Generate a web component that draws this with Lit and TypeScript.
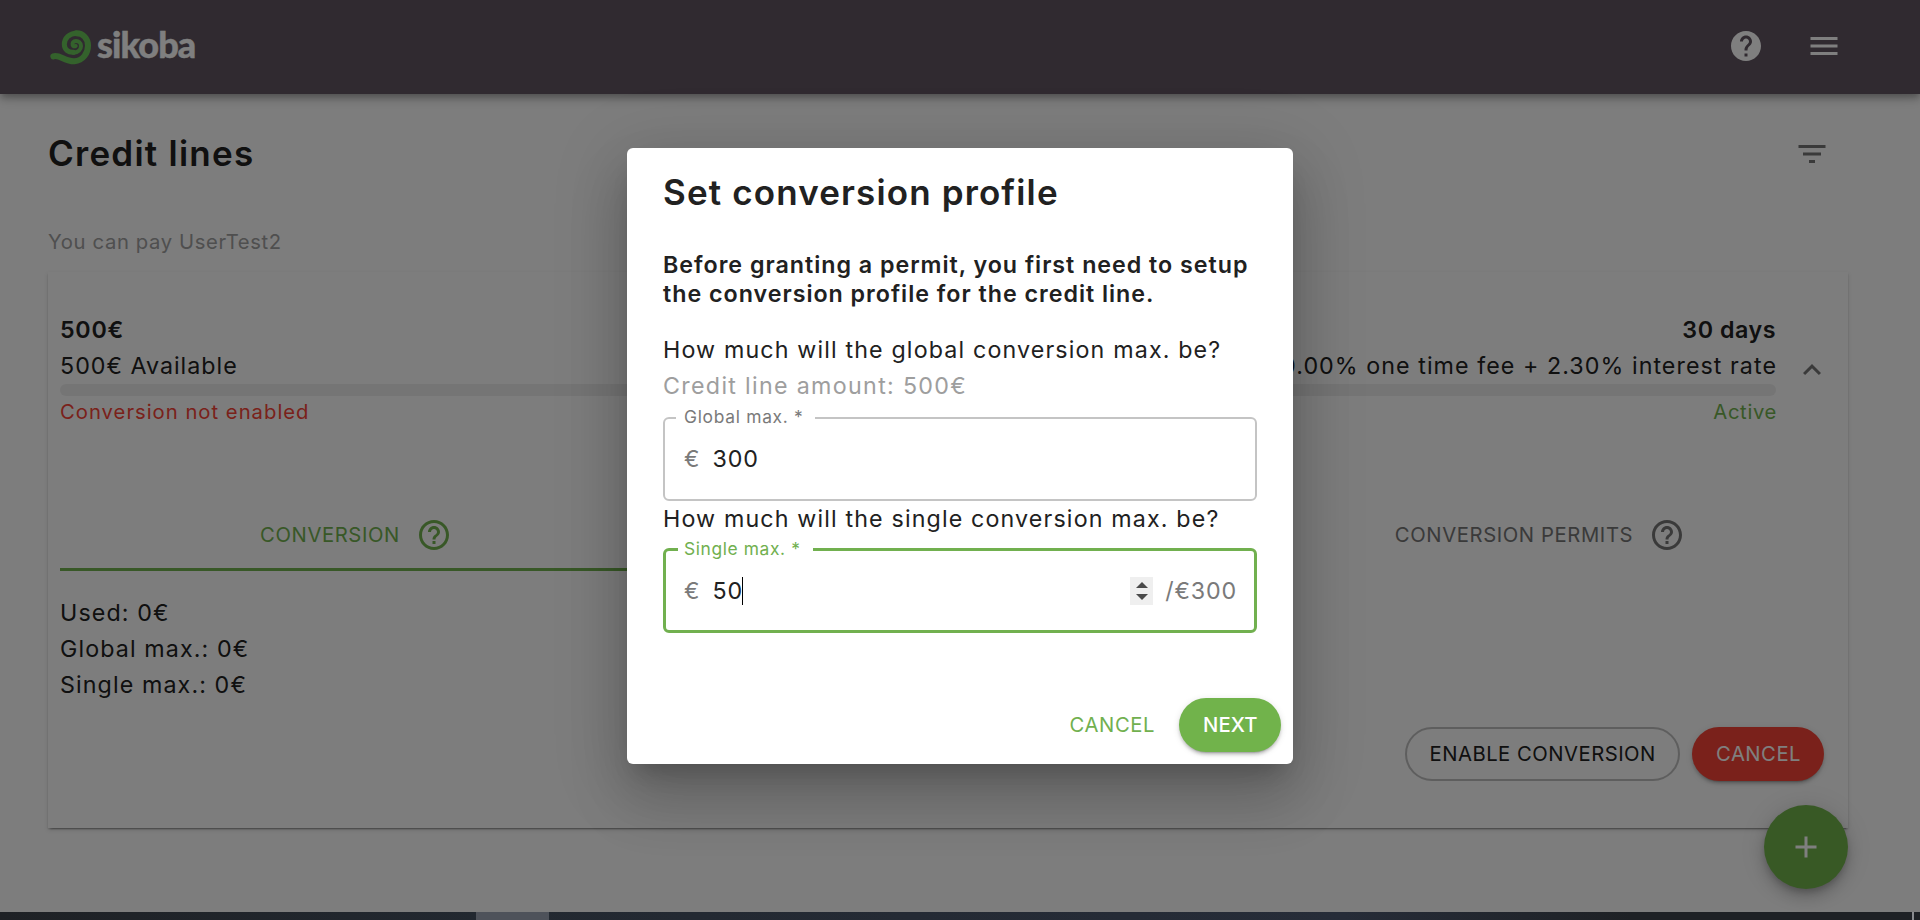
import { LitElement, html, css, svg } from "lit";
import { customElement, property } from "lit/decorators.js";
import { classMap } from "lit/directives/class-map.js";

const ICONS: Record<string, string> = {
  help: "M12 2C6.48 2 2 6.48 2 12s4.48 10 10 10 10-4.48 10-10S17.52 2 12 2zm1 17h-2v-2h2v2zm2.07-7.75l-.9.92C13.45 12.9 13 13.5 13 15h-2v-.5c0-1.1.45-2.1 1.17-2.83l1.24-1.26c.37-.36.59-.86.59-1.41 0-1.1-.9-2-2-2s-2 .9-2 2H8c0-2.21 1.79-4 4-4s4 1.79 4 4c0 .88-.36 1.68-.93 2.25z",
  helpOutline: "M11 18h2v-2h-2v2zm1-16C6.48 2 2 6.48 2 12s4.48 10 10 10 10-4.48 10-10S17.52 2 12 2zm0 18c-4.41 0-8-3.59-8-8s3.59-8 8-8 8 3.59 8 8-3.59 8-8 8zm0-14c-2.21 0-4 1.79-4 4h2c0-1.1.9-2 2-2s2 .9 2 2c0 2-3 1.75-3 5h2c0-2.25 3-2.5 3-5 0-2.21-1.79-4-4-4z",
  menu: "M3 18h18v-2H3v2zm0-5h18v-2H3v2zm0-7v2h18V6H3z",
  filter: "M10 18h4v-2h-4v2zM3 6v2h18V6H3zm3 7h12v-2H6v2z",
  expandLess: "M12 8l-6 6 1.41 1.41L12 10.83l4.59 4.58L18 14z",
  add: "M19 13h-6v6h-2v-6H5v-2h6V5h2v6h6v2z",
};

@customElement("sk-icon")
class SkIcon extends LitElement {
  @property() name = "";
  static styles = css`
    :host { display: block; width: 36px; height: 36px; flex: none; }
    .svg { display: block; width: 100%; height: 100%; fill: currentColor; }
  `;
  render() {
    return html`<svg class="svg" viewBox="0 0 24 24">${svg`<path d=${ICONS[this.name] ?? ""}></path>`}</svg>`;
  }
}

@customElement("sk-logo")
class SkLogo extends LitElement {
  static styles = css`
    :host { display: flex; align-items: center; height: 40px; }
    .mark { display: block; width: 42px; height: 36px; margin-top: 3px; flex: none; fill: none; stroke: #69c458; stroke-linecap: round; }
    .word {
      font: 900 36px/40px "Lato", sans-serif; letter-spacing: -0.9px; color: #fff;
      -webkit-text-stroke: 0.4px #fff; margin: 0 0 4px 5px;
    }
  `;
  render() {
    return html`
      <svg class="mark" viewBox="29 29 126 108">
        <path stroke-width="18" d="M39 108C58 102 74 124 102 123C128 121 143 98 143 76C143 54 128 39 108 39"></path>
        <path stroke-width="15" d="M108 38.500C88 38.500 72 53 72 72C72 88 85 97 99 96"></path>
        <path stroke-width="12" d="M99 97C114 96 122 87 122 77C122 67 114 62 107 62C99 62 95 68 97 74C98 78 102 79 106 77"></path>
      </svg>
      <span class="word">sikoba</span>
    `;
  }
}

@customElement("sk-amount-field")
class SkAmountField extends LitElement {
  @property() label = "";
  @property() value = "";
  @property() suffix = "";
  @property({ type: Boolean }) focused = false;
  static styles = css`
    :host { display: block; }
    .box {
      position: relative; box-sizing: border-box; display: flex; align-items: center;
      height: 84px; padding: 0 19px; border: 2px solid #c4c4c4; border-radius: 6px;
      font: 400 23.25px/28px "Inter", sans-serif; letter-spacing: 0.9px; color: #212121;
    }
    .focused { height: 85px; padding: 0 18px; border: 3px solid #71b04f; }
    .label {
      position: absolute; top: -12px; left: 11px; height: 20px; padding: 0 11.5px 0 8px; background: #fff;
      font-size: 17.4px; line-height: 20px; letter-spacing: 0.7px; color: #7a7a7a; white-space: pre;
    }
    .focused .label { left: 12px; padding: 0 12.5px 0 6px; letter-spacing: 0.6px; color: #71b04f; }
    .unit { color: #7a7a7a; width: 28.500px; }
    .caret { width: 1.5px; height: 28px; background: #000; margin-left: -1.5px; }
    .rest { flex: 1; }
    .spin {
      display: flex; flex-direction: column; align-items: center; justify-content: center; gap: 6px;
      width: 23px; height: 28px; background: #efefef; margin-right: 12px;
    }
    .tri { display: block; width: 12px; height: 6px; fill: #4a4a4a; }
    .suffix { color: #7a7a7a; letter-spacing: 0.84px; margin-right: -1px; }
  `;
  render() {
    return html`
      <div class=${classMap({ box: true, focused: this.focused })}>
        <span class="label">${this.label} *</span>
        <span class="unit">€</span>
        <span class="value">${this.value}</span>
        ${this.focused ? html`<span class="caret"></span>` : ""}
        <span class="rest"></span>
        ${this.focused
          ? html`<span class="spin">
              <svg class="tri" viewBox="0 0 12 6"><path d="M6 0L12 6H0z"></path></svg>
              <svg class="tri" viewBox="0 0 12 6"><path d="M0 0H12L6 6z"></path></svg>
            </span>`
          : ""}
        ${this.suffix ? html`<span class="suffix">${this.suffix}</span>` : ""}
      </div>
    `;
  }
}

@customElement("sk-dialog")
class SkDialog extends LitElement {
  static styles = css`
    :host {
      display: flex; flex-direction: column; box-sizing: border-box; width: 666px; height: 616px;
      padding: 22px 12px 12px 36px; background: #fff; border-radius: 6px; color: #212121;
      font: 400 23.25px/36px "Inter", sans-serif; letter-spacing: 1.14px; white-space: nowrap;
      box-shadow: 0 16px 22px -10px rgba(0, 0, 0, .2), 0 36px 57px 4px rgba(0, 0, 0, .14), 0 13px 69px 12px rgba(0, 0, 0, .12);
    }
    .title { margin: 0; font-size: 35px; font-weight: 600; line-height: 44px; letter-spacing: 1.14px; }
    .intro { margin: 36px 0 24px; font-weight: 600; line-height: 29px; letter-spacing: 0.98px; }
    .muted { color: #9e9e9e; letter-spacing: 1.31px; }
    .field { margin-right: 24px; }
    .first { margin-top: 13px; }
    .second { margin-top: 11px; }
    .actions { display: flex; justify-content: flex-end; align-items: center; margin-top: auto; font-size: 20.25px; }
    .cancel { color: #71b04f; letter-spacing: 0.56px; margin-right: 24px; }
    .next {
      box-sizing: border-box; width: 102px; height: 54px; padding-left: 24px; border-radius: 27px; line-height: 54px;
      background: #71b34b; color: #fff; font-weight: 500; letter-spacing: 0.12px;
      box-shadow: 0 4px 1.5px -3px rgba(0, 0, 0, .2), 0 3px 3px rgba(0, 0, 0, .14), 0 1.5px 7.5px rgba(0, 0, 0, .12);
    }
  `;
  render() {
    return html`
      <h2 class="title">Set conversion profile</h2>
      <div class="intro">Before granting a permit, you first need to setup<br />the conversion profile for the credit line.</div>
      <div>How much will the global conversion max. be?</div>
      <div class="muted">Credit line amount: 500€</div>
      <sk-amount-field class="field first" label="Global max." value="300"></sk-amount-field>
      <div>How much will the single conversion max. be?</div>
      <sk-amount-field class="field second" label="Single max." value="50" suffix="/€300" focused></sk-amount-field>
      <div class="actions"><span class="cancel">CANCEL</span><span class="next">NEXT</span></div>
    `;
  }
}

@customElement("app-root")
class AppRoot extends LitElement {
  static styles = css`
    :host {
      display: flex; flex-direction: column; width: 1920px; height: 920px; overflow: hidden;
      font: 400 23.25px/36px "Inter", sans-serif; letter-spacing: 1px; color: #212121; white-space: nowrap;
    }
    .page { position: relative; height: 912px; background: #fafafa; overflow: hidden; }
    .header {
      display: flex; align-items: center; justify-content: space-between; box-sizing: border-box; height: 94px;
      padding: 0 78px 2px 50px; background: #605560; color: #fff;
      box-shadow: 0 3px 6px -1.5px rgba(0, 0, 0, .2), 0 6px 7.5px rgba(0, 0, 0, .14), 0 1.5px 15px rgba(0, 0, 0, .12);
    }
    .tools { display: flex; gap: 42px; }
    .content { padding: 42px 72px 0 48px; }
    .heading { display: flex; align-items: center; justify-content: space-between; height: 36px; padding-right: 18px; }
    .title { margin: 0 0 2px; font-size: 35px; font-weight: 600; letter-spacing: 1.25px; }
    .grey { color: #757575; }
    .caption { margin-top: 54px; font-size: 20.25px; line-height: 32px; letter-spacing: 0.63px; color: #9e9e9e; }
    .card {
      box-sizing: border-box; height: 556px; margin-top: 14px; padding: 40px 12px 0; background: #fafafa;
      box-shadow: 0 3px 1.5px -1.5px rgba(0, 0, 0, .2), 0 1.5px 1.5px rgba(0, 0, 0, .14), 0 1.5px 4.5px rgba(0, 0, 0, .12);
    }
    .summary { display: flex; align-items: center; gap: 18px; height: 116px; }
    .facts { width: 1716px; }
    .row { display: flex; justify-content: space-between; }
    .strong { font-weight: 600; }
    .s-amount { letter-spacing: 0.75px; }
    .s-days { letter-spacing: 0.54px; }
    .rate { letter-spacing: 1.05px; margin-right: -1px; }
    .bar { height: 12px; border-radius: 6px; background: #ebebeb; }
    .small { font-size: 20.25px; line-height: 32px; }
    .red { color: #f44336; letter-spacing: 1px; }
    .green { color: #71b04f; letter-spacing: 0.64px; margin-right: -1px; }
    .tabs { display: grid; grid-template-columns: repeat(3, 1fr); height: 72px; margin-top: 71px; font-size: 20.25px; }
    .tab { display: flex; align-items: center; justify-content: center; gap: 16px; color: #757575; letter-spacing: 0.6px; }
    .active { color: #71b04f; box-shadow: inset 0 -3px #71b04f; }
    .details { margin-top: 24px; letter-spacing: 1.1px; }
    .buttons { display: flex; justify-content: flex-end; gap: 12px; margin: 24px 12px 0 0; font-size: 20.25px; line-height: 54px; }
    .outlined {
      box-sizing: border-box; width: 275px; height: 54px; padding-left: 22.5px; border: 2px solid #bdbdbd;
      border-radius: 27px; line-height: 50px; letter-spacing: 0.5px;
    }
    .danger {
      box-sizing: border-box; width: 132px; height: 54px; padding-left: 24px; border-radius: 27px;
      background: #f44336; color: #fff; letter-spacing: 0.5px;
      box-shadow: 0 4px 1.5px -3px rgba(0, 0, 0, .2), 0 3px 3px rgba(0, 0, 0, .14), 0 1.5px 7.5px rgba(0, 0, 0, .12);
    }
    .fab {
      position: absolute; right: 72px; bottom: 23px; display: flex; align-items: center; justify-content: center;
      width: 84px; height: 84px; border-radius: 50%; background: #71b34b; color: #fff;
      box-shadow: 0 4.5px 7.5px -1.5px rgba(0, 0, 0, .2), 0 9px 15px rgba(0, 0, 0, .14), 0 1.5px 27px rgba(0, 0, 0, .12);
    }
    .overlay {
      position: absolute; inset: 0; display: flex; justify-content: center; align-items: center; background: rgba(0, 0, 0, .5);
    }
    .dock {
      display: grid; grid-template-columns: 476px 73px 1fr 2px 6px; height: 8px;
      background: linear-gradient(90deg, #1e2125, #222830 25%, #262c38 70%, #1e2125 85%);
    }
    .task { background: #4e525a; grid-column: 2; }
    .edge { background: #8a8c90; grid-column: 4; }
  `;
  render() {
    return html`
      <div class="page">
        <header class="header">
          <sk-logo></sk-logo>
          <div class="tools"><sk-icon name="help"></sk-icon><sk-icon name="menu"></sk-icon></div>
        </header>
        <main class="content">
          <div class="heading"><h1 class="title">Credit lines</h1><sk-icon class="grey" name="filter"></sk-icon></div>
          <div class="caption">You can pay UserTest2</div>
          <section class="card">
            <div class="summary">
              <div class="facts">
                <div class="row strong"><span class="s-amount">500€</span><span class="s-days">30 days</span></div>
                <div class="row"><span>500€ Available</span><span class="rate">0.00% one time fee + 2.30% interest rate</span></div>
                <div class="bar"></div>
                <div class="row small"><span class="red">Conversion not enabled</span><span class="green">Active</span></div>
              </div>
              <sk-icon class="grey" name="expandLess"></sk-icon>
            </div>
            <div class="tabs">
              <div class="tab active"><span>CONVERSION</span><sk-icon name="helpOutline"></sk-icon></div>
              <div class="tab"></div>
              <div class="tab"><span>CONVERSION PERMITS</span><sk-icon name="helpOutline"></sk-icon></div>
            </div>
            <div class="details">
              <div>Used: 0€</div>
              <div>Global max.: 0€</div>
              <div>Single max.: 0€</div>
            </div>
            <div class="buttons"><span class="outlined">ENABLE CONVERSION</span><span class="danger">CANCEL</span></div>
          </section>
        </main>
        <div class="fab"><sk-icon name="add"></sk-icon></div>
        <div class="overlay"><sk-dialog></sk-dialog></div>
      </div>
      <div class="dock"><span class="task"></span><span class="edge"></span></div>
    `;
  }
}
